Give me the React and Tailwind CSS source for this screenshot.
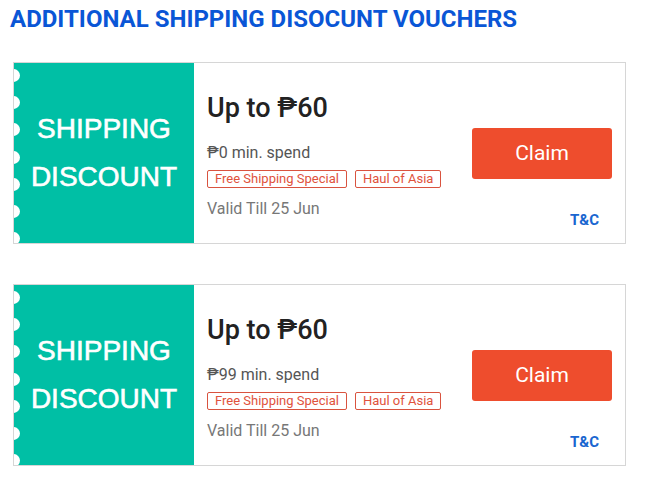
import React from "react";

const vouchers = [
  { id: 1, amount: "Up to ₱60", minSpend: "₱0 min. spend", valid: "Valid Till 25 Jun" },
  { id: 2, amount: "Up to ₱60", minSpend: "₱99 min. spend", valid: "Valid Till 25 Jun" },
];

const Scallops = () => (
  <div className="absolute left-[-7px] top-[6px] flex flex-col gap-[14.2px]">
    {[0, 1, 2, 3, 4, 5, 6].map((i) => (
      <div key={i} className="w-[13px] h-[13px] rounded-full bg-white" />
    ))}
  </div>
);

const VoucherCard = ({ voucher }) => (
  <div className="relative flex h-[182px] border border-[#d6d6d6] bg-white overflow-hidden">
    <div className="w-[180px] shrink-0 bg-[#00bfa5] flex flex-col items-center justify-center text-white text-[28px] leading-[48px] [-webkit-text-stroke:0.6px_white] font-['Liberation_Sans',Arial,sans-serif]">
      <span>SHIPPING</span>
      <span>DISCOUNT</span>
    </div>
    <Scallops />
    <div className="flex-1 flex pl-[13px] pr-[13px] font-['Roboto',sans-serif]">
      <div className="flex-1 pt-[27px]">
        <div className="text-[27px] leading-[36px] font-medium text-[#222]">
          {voucher.amount}
        </div>
        <div className="mt-[17px] text-[16px] leading-[20px] text-[#555]">
          {voucher.minSpend}
        </div>
        <div className="mt-[7px] flex gap-[8px]">
          <span className="border border-[#d9533f] rounded-[2px] px-[7px] text-[13px] leading-[16px] text-[#e0523c]">
            Free Shipping Special
          </span>
          <span className="border border-[#d9533f] rounded-[2px] px-[7px] text-[13px] leading-[16px] text-[#e0523c]">
            Haul of Asia
          </span>
        </div>
        <div className="mt-[11px] text-[16px] leading-[20px] text-[#777]">
          {voucher.valid}
        </div>
      </div>
      <div className="w-[140px] flex flex-col items-end pt-[65px]">
        <button className="w-[140px] h-[51px] rounded-[3px] bg-[#ee4d2d] text-white text-[21px]">
          Claim
        </button>
        <a className="mt-[32px] mr-[13px] text-[15px] leading-[18px] font-bold text-[#1a66d0]">
          T&amp;C
        </a>
      </div>
    </div>
  </div>
);

export default function App() {
  return (
    <div className="bg-white min-h-screen w-[645px] pt-[3px] font-['Roboto',sans-serif]">
      <h1 className="pl-[10px] text-[24px] leading-[32px] font-bold text-[#0a56d6]">
        ADDITIONAL SHIPPING DISOCUNT VOUCHERS
      </h1>
      <div className="mt-[27px] ml-[13px] mr-[19px] flex flex-col gap-[40px]">
        {vouchers.map((v) => (
          <VoucherCard key={v.id} voucher={v} />
        ))}
      </div>
    </div>
  );
}
